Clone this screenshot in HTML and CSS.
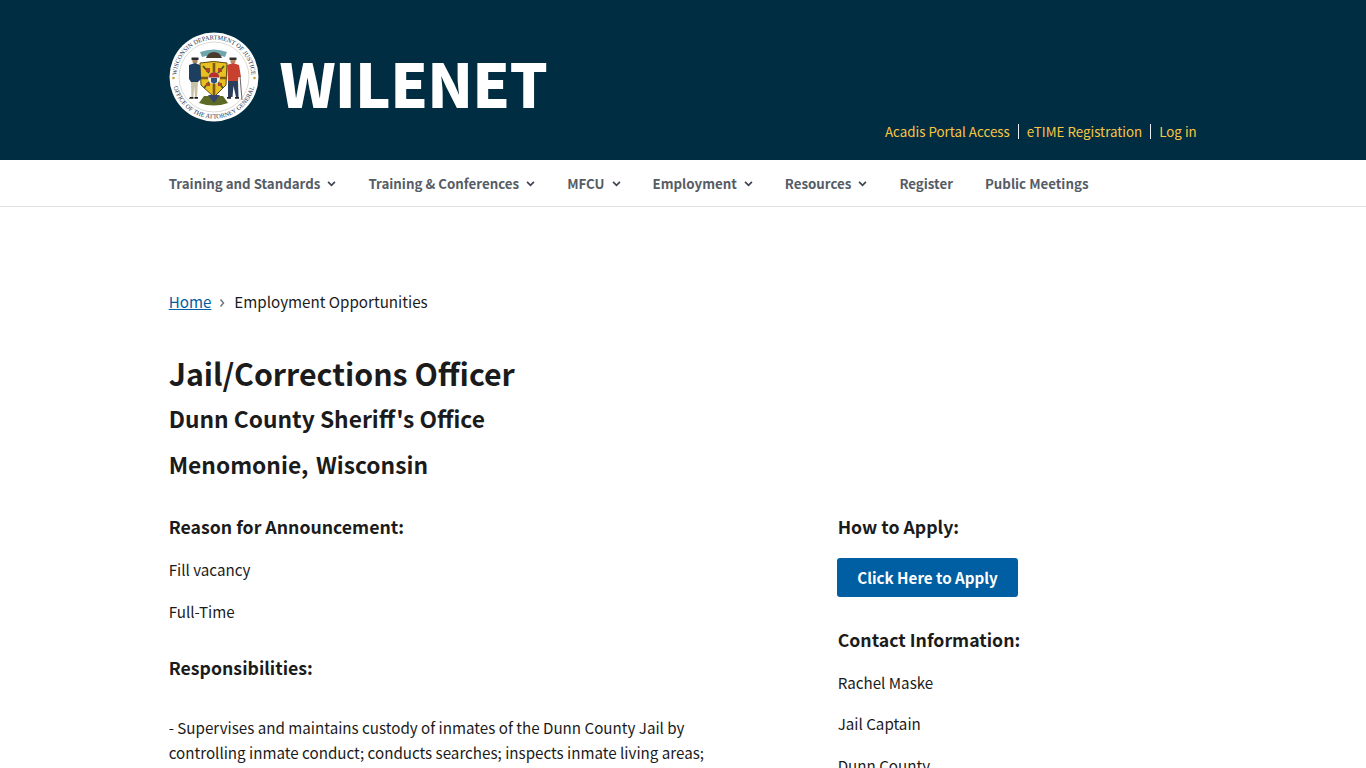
FILE: index.html
```html
<!DOCTYPE html>
<html lang="en">
<head>
<meta charset="utf-8">
<title>Jail/Corrections Officer | WILENET</title>
<link rel="stylesheet" href="styles.css">
</head>
<body>
<header class="site-header">
  <div class="wrap header-inner">
    <a class="brand" href="#">
      <svg class="seal" viewBox="0 0 90 90" role="img" aria-label="Wisconsin Department of Justice seal">
        <defs>
          <path id="arcTop" d="M7.500 45a37.500 37.500 0 0 1 75 0"/>
          <path id="arcBottom" d="M3.500 45a41.500 41.500 0 0 0 83 0"/>
        </defs>
        <circle cx="45" cy="45" r="44.500" fill="#fff"/>
        <circle cx="45" cy="45" r="35" fill="none" stroke="#b9b5a6" stroke-width=".5"/>
        <text class="seal-text"><textPath href="#arcTop" startOffset="50%" text-anchor="middle">WISCONSIN DEPARTMENT OF JUSTICE</textPath></text>
        <text class="seal-text"><textPath href="#arcBottom" startOffset="50%" text-anchor="middle">OFFICE OF THE ATTORNEY GENERAL</textPath></text>
        <circle cx="4.500" cy="46" r="1.300" fill="#c9a23c"/>
        <circle cx="85.500" cy="46" r="1.300" fill="#c9a23c"/>
        <path d="M31 20q14-5 27 0l-2 5q-11-4-23 0z" fill="#6fa6ae"/>
        <path d="M37 26q2-6 8-6 6 0 8 6z" fill="#4a3a2c"/>
        <path d="M30 71q15 5 29 0l-5-7H35z" fill="#5c6a26"/>
        <path d="M31 31q14-3 27 0l-1 22-12 12-13-12z" fill="#e8c020" stroke="#5e4a10" stroke-width="1"/>
        <path d="M45 31v33M32 46h26" stroke="#7a5a14" stroke-width="2.600"/>
        <path d="M34 34l6 7M55 34l-6 7M35 56l5-6M54 56l-5-6" stroke="#3f5a2a" stroke-width="1.800"/>
        <path d="M37 36h4v4h-4zM49 36h4v4h-4zM37 51h4v3h-4zM49 51h4v3h-4z" fill="#a8472a"/>
        <circle cx="45" cy="46" r="6" fill="#efece0"/>
        <path d="M39.500 45.500a5.500 5.500 0 0 1 11 0z" fill="#b3332c"/>
        <path d="M42 46h6v4l-3 2-3-2z" fill="#2f4f7d"/>
        <path d="M39 63l6 8 6-8z" fill="#35456b"/>
        <circle cx="26" cy="29" r="2.600" fill="#a9835f"/>
        <path d="M22.500 28h7v-2.500h-7z" fill="#2a2a2a"/>
        <path d="M20 33l6-2 5 2 1 14-3 3H22l-2-3z" fill="#1c3f60"/>
        <path d="M22 50h7l-1 15h-2l-.8-11-.8 11h-2z" fill="#c7c1a8"/>
        <path d="M21 65h3.500v1.800H20zM25.500 65H29v1.800h-3.500z" fill="#222"/>
        <circle cx="64" cy="29" r="2.600" fill="#b98a66"/>
        <path d="M60.500 28h7v-2.500h-7z" fill="#33302a"/>
        <path d="M58 33l6-2 6 2 2 12h-2.500l-.5 4h-10z" fill="#c8402f"/>
        <path d="M59 49h10l.5 16h-2.500l-2.500-11-1 11H59z" fill="#2b3f5c"/>
        <path d="M71 44l2 24" stroke="#555" stroke-width=".9"/>
        <path d="M58 65h4v1.800h-4zM66 65h4v1.800h-4z" fill="#222"/>
      </svg>
      <span class="brand-name">WILENET</span>
    </a>
    <ul class="utility">
      <li><a href="#">Acadis Portal Access</a></li>
      <li><a href="#">eTIME Registration</a></li>
      <li><a href="#">Log in</a></li>
    </ul>
  </div>
</header>
<nav class="main-nav">
  <ul class="wrap nav-list">
    <li><a href="#">Training and Standards<svg class="chev" viewBox="0 0 10 6"><path d="M1.200 1L5 4.800 8.800 1"/></svg></a></li>
    <li><a href="#">Training &amp; Conferences<svg class="chev" viewBox="0 0 10 6"><path d="M1.200 1L5 4.800 8.800 1"/></svg></a></li>
    <li><a href="#">MFCU<svg class="chev" viewBox="0 0 10 6"><path d="M1.200 1L5 4.800 8.800 1"/></svg></a></li>
    <li><a href="#">Employment<svg class="chev" viewBox="0 0 10 6"><path d="M1.200 1L5 4.800 8.800 1"/></svg></a></li>
    <li><a href="#">Resources<svg class="chev" viewBox="0 0 10 6"><path d="M1.200 1L5 4.800 8.800 1"/></svg></a></li>
    <li><a href="#">Register</a></li>
    <li><a href="#">Public Meetings</a></li>
  </ul>
</nav>
<main class="wrap content">
  <div class="breadcrumb">
    <a href="#">Home</a>
    <svg class="crumb-sep" viewBox="0 0 6 10"><path d="M1.500 1.500L4.500 5 1.500 8.500"/></svg>
    <span>Employment Opportunities</span>
  </div>
  <h1>Jail/Corrections Officer</h1>
  <h2 class="agency">Dunn County Sheriff's Office</h2>
  <h2 class="place"><span class="city">Menomonie,</span><span>Wisconsin</span></h2>
  <div class="columns">
    <section class="primary">
      <h3>Reason for Announcement:</h3>
      <p class="first">Fill vacancy</p>
      <p>Full-Time</p>
      <h3 class="resp">Responsibilities:</h3>
      <p class="long">- Supervises and maintains custody of inmates of the Dunn County Jail by controlling inmate conduct; conducts searches; inspects inmate living areas;</p>
    </section>
    <aside class="secondary">
      <h3>How to Apply:</h3>
      <a class="apply" href="#">Click Here to Apply</a>
      <h3 class="contact">Contact Information:</h3>
      <p class="first">Rachel Maske</p>
      <p>Jail Captain</p>
      <p>Dunn County</p>
    </aside>
  </div>
</main>
</body>
</html>
```
FILE: styles.css
```css
* { box-sizing: border-box; }
html, body { margin: 0; padding: 0; }
body {
  font-family: "Noto Sans CJK SC", "Noto Sans", sans-serif;
  font-size: 15.160px;
  line-height: 25px;
  color: #1b1b1b;
  background: #fff;
  height: 768px;
  overflow: hidden;
}
ul { list-style: none; margin: 0; padding: 0; }
.wrap { width: 1028px; margin-left: 168.700px; }

.site-header { height: 160px; background: #002d42; }
.header-inner { display: flex; justify-content: space-between; height: 160px; }
.brand { display: flex; align-items: center; gap: 20px; padding-top: 32px; padding-left: .800px; height: 122px; text-decoration: none; }
.seal { width: 90px; height: 90px; flex: none; }
.seal-text { font-family: "Liberation Serif", serif; font-size: 6.300px; fill: #24304d; }
.brand-name { color: #fff; font-weight: 900; font-size: 60px; line-height: 60px; letter-spacing: -.75px; position: relative; top: 5px; }
.utility { display: flex; align-self: flex-end; padding-bottom: 16px; font-size: 13.350px; line-height: 25px; }
.utility li + li { margin-left: 8px; padding-left: 9px; position: relative; }
.utility li + li::before { content: ""; position: absolute; left: 0; top: 5px; height: 15px; width: 1px; background: #e8eef2; }
.utility a { color: #f9c642; text-decoration: none; }

.main-nav { height: 47px; border-bottom: 1px solid #dfe1e2; background: #fff; }
.nav-list { display: flex; gap: 32px; height: 46px; align-items: center; }
.nav-list a { display: flex; align-items: center; color: #565c65; font-weight: 700; font-size: 13.300px; text-decoration: none; }
.chev { width: 9px; height: 5.400px; margin: 2px 0 0 7px; fill: none; stroke: #3d4551; stroke-width: 1.900; }

.breadcrumb { display: flex; align-items: center; margin-top: 82px; height: 25px; }
.breadcrumb a { color: #005ea2; }
.crumb-sep { width: 6px; height: 10px; margin: 2px 9px 0 8px; fill: none; stroke: #71767a; stroke-width: 1.500; }

h1 { margin: 39px 0 0; font-size: 30.330px; line-height: 40px; font-weight: 700; }
h2 { margin: 0; font-size: 22.770px; line-height: 30px; font-weight: 700; }
.agency { margin-top: 11px; }
.place { margin-top: 16px; display: flex; }
.city { margin-right: 7.500px; }

.columns { display: flex; margin-top: 34px; }
.primary { width: 669px; flex: none; }
.secondary { flex: 1; }
h3 { margin: 0; font-size: 17.700px; line-height: 25px; font-weight: 700; }
p { margin: 17px 0 0; }
.primary .first { margin-top: 18px; }
.resp { margin-top: 31px; }
.long { width: 560px; margin-top: 35px; }
.apply { display: block; width: 181px; height: 39px; margin: 19px 0 0 -.700px; line-height: 38px; text-align: center; background: #005ea2; color: #fff; font-weight: 700; border-radius: 3px; text-decoration: none; }
.contact { margin-top: 30px; }
.secondary p { margin-top: 16.500px; }
.secondary .first { margin-top: 17.500px; }
```
